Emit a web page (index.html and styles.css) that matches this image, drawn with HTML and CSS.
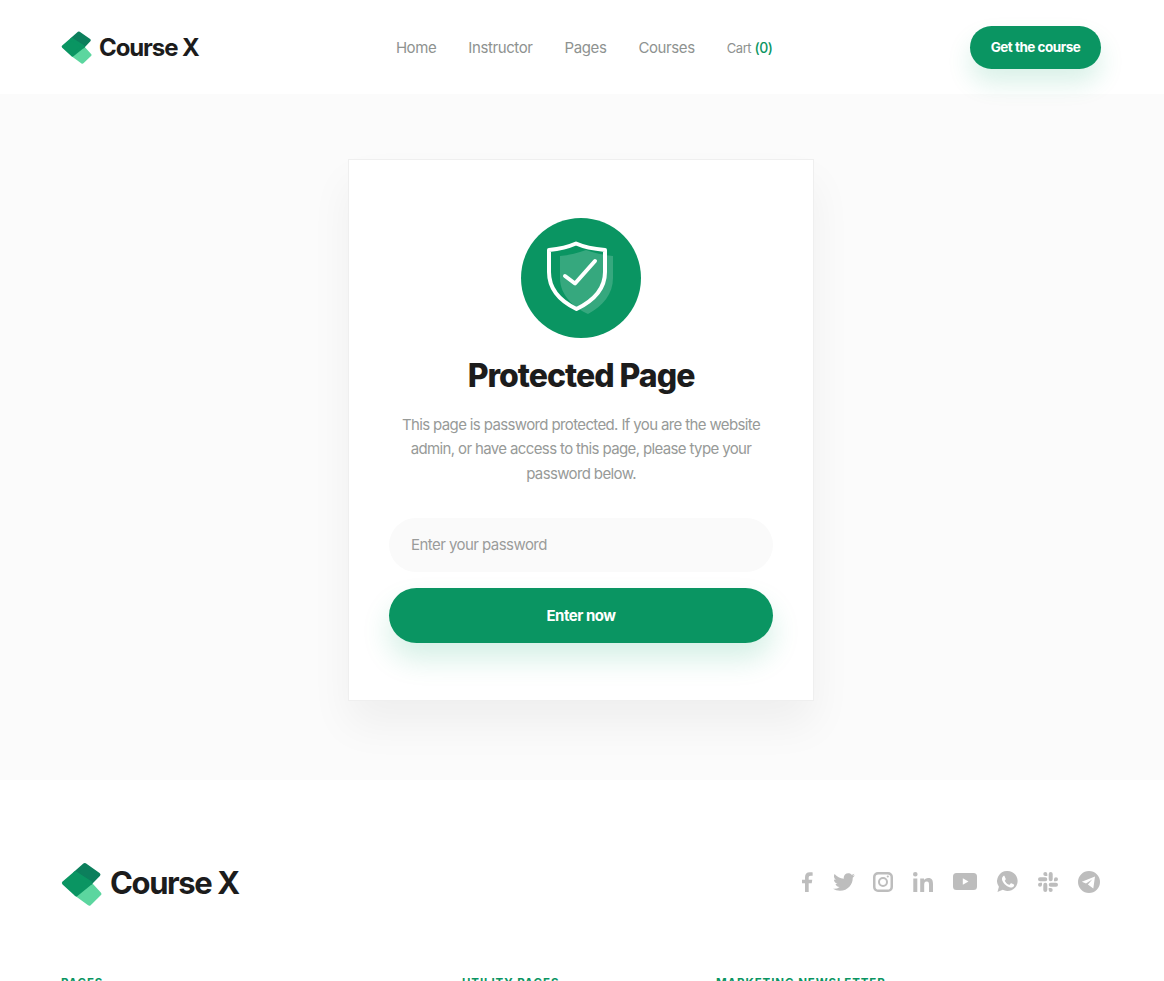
FILE: index.html
```html
<!DOCTYPE html>
<html lang="en">
<head>
  <meta charset="UTF-8">
  <title>Protected Page - Course X</title>
  <link rel="stylesheet" href="styles.css">
</head>
<body>

  <header class="header">
    <a class="logo" href="#">
      <svg class="logo-mark" viewBox="0 0 31 34"><use href="#mark"/></svg>
      <span class="logo-text">Course X</span>
    </a>
    <nav class="nav">
      <a href="#">Home</a>
      <a href="#">Instructor</a>
      <a href="#">Pages</a>
      <a href="#">Courses</a>
      <a class="cart" href="#">Cart <b>(0)</b></a>
    </nav>
    <a class="btn btn-small" href="#">Get the course</a>
  </header>

  <main class="main">
    <div class="card">
      <div class="shield">
        <svg viewBox="0 0 72 80" width="72" height="80">
          <path class="shield-back" d="M17 16 C27 15 35 13 43 10 C51 13 60 15 70 16 V38 C70 54 60 66 45 74 C32 68 17 56 17 38 Z"/>
          <path class="shield-line" d="M33 3.500 C42 7.500 51 9 62 10 V32 C62 49 50 61 33.500 69 C17 61 6 49 6 32 V10 C16 9 24 7.500 33 3.500 Z"/>
          <path class="shield-line" d="M22 36 L32 43.500 L52 21"/>
        </svg>
      </div>
      <h1>Protected Page</h1>
      <p>This page is password protected. If you are the website admin, or have access to this page, please type your password below.</p>
      <input type="password" placeholder="Enter your password">
      <button class="btn btn-big">Enter now</button>
    </div>
  </main>

  <footer class="footer">
    <div class="footer-top">
      <a class="logo logo-big" href="#">
        <svg class="logo-mark" viewBox="0 0 31 34"><use href="#mark"/></svg>
        <span class="logo-text">Course X</span>
      </a>
      <div class="social">
        <svg width="11" height="22" viewBox="0 0 12 22"><path d="M3.300 22V12.400H0V8.600h3.300V5.800C3.300 2.300 5.300 .4 8.300 .4c1.400 0 2.700 .1 3.300 .2v3.500H9.500c-1.700 0-2.200 1-2.200 2.100v2.400h3.900l-.6 3.800H7.300V22z"/></svg>
        <svg class="tw" width="22" height="18" viewBox="1.500 3.700 21 17.500" preserveAspectRatio="none"><path d="M22.460 6c-.77.350-1.600.580-2.460.690.880-.530 1.560-1.370 1.880-2.380-.830.500-1.750.850-2.720 1.050C18.370 4.500 17.260 4 16 4c-2.350 0-4.270 1.920-4.270 4.290 0 .340.040.670.110.980C8.280 9.090 5.110 7.380 3 4.790c-.370.630-.580 1.370-.580 2.150 0 1.490.750 2.810 1.910 3.560-.710 0-1.370-.200-1.950-.500v.030c0 2.080 1.480 3.820 3.440 4.210a4.220 4.220 0 0 1-1.930.070 4.280 4.280 0 0 0 4 2.980 8.521 8.521 0 0 1-5.330 1.840c-.340 0-.680-.020-1.020-.060C3.440 20.290 5.700 21 8.120 21 16 21 20.330 14.460 20.330 8.790c0-.190 0-.370-.010-.560.840-.600 1.560-1.360 2.140-2.230z"/></svg>
        <svg width="20" height="20" viewBox="0 0 20 20"><path fill-rule="evenodd" d="M5 0h10a5 5 0 0 1 5 5v10a5 5 0 0 1-5 5H5a5 5 0 0 1-5-5V5a5 5 0 0 1 5-5zm.3 2.500A2.800 2.800 0 0 0 2.500 5.300v9.400a2.800 2.800 0 0 0 2.800 2.800h9.400a2.800 2.800 0 0 0 2.800-2.800V5.300a2.800 2.800 0 0 0-2.800-2.800zM10 5a5 5 0 1 1 0 10 5 5 0 0 1 0-10zm0 2a3 3 0 1 0 0 6 3 3 0 0 0 0-6zm4.800-3.600a1.100 1.100 0 1 1 0 2.200 1.100 1.100 0 0 1 0-2.200z"/></svg>
        <svg width="20" height="20" viewBox="0 0 20 20"><path d="M2.300 0a2.300 2.300 0 1 1 0 4.600 2.300 2.300 0 0 1 0-4.600zM.3 6.400h4V20h-4zM7.200 6.400H11v1.900c.7-1.200 2.200-2.200 4.200-2.200 4 0 4.800 2.600 4.800 6V20h-4v-7c0-1.700-.1-3.500-2.300-3.500s-2.500 1.700-2.500 3.400V20h-4z"/></svg>
        <svg width="24" height="17" viewBox="0 0 24 17"><path fill-rule="evenodd" d="M3.500 0h17A3.500 3.500 0 0 1 24 3.500v10a3.500 3.500 0 0 1-3.500 3.500h-17A3.500 3.500 0 0 1 0 13.500v-10A3.500 3.500 0 0 1 3.500 0zm6.300 5.200v6.600l5.700-3.300z"/></svg>
        <svg width="21" height="23" viewBox="0 0 22 23"><path fill-rule="evenodd" d="M11 .5a10.500 10.500 0 1 1-5 19.700L.5 22.500 2 17A10.500 10.500 0 0 1 11 .5zM7.600 5.600c-.4 0-1 .1-1.400.7-.5.600-1 1.400-1 2.700 0 1.600 1.100 3.100 1.300 3.300.2.300 2.200 3.400 5.400 4.700 2.600 1 3.100.8 3.700.8.600-.1 1.900-.8 2.100-1.500.3-.7.3-1.400.2-1.500-.1-.2-.3-.2-.7-.4l-2.100-1c-.3-.1-.6-.2-.8.200-.2.300-.8 1-1 1.200-.2.200-.4.200-.7.100-.9-.4-1.800-.8-2.900-1.900-.8-.8-1.300-1.600-1.500-1.900-.2-.3 0-.5.100-.7l.5-.6c.2-.2.200-.4.300-.6.100-.2.100-.4 0-.6l-1-2.200c-.2-.8-.6-.8-1-.8z"/></svg>
        <svg width="20" height="20" viewBox="0 0 20 20"><path d="M7.300 0a2 2 0 0 1 2 2v2h-2a2 2 0 0 1 0-4zM0 7.300a2 2 0 0 1 2-2h5.300a2 2 0 0 1 0 4H2a2 2 0 0 1-2-2zM20 7.300a2 2 0 0 1-2 2h-2v-2a2 2 0 0 1 4 0zM14.700 7.300a2 2 0 0 1-4 0V2a2 2 0 0 1 4 0zM12.700 20a2 2 0 0 1-2-2v-2h2a2 2 0 0 1 0 4zM20 12.700a2 2 0 0 1-2 2h-5.300a2 2 0 0 1 0-4H18a2 2 0 0 1 2 2zM0 12.700a2 2 0 0 1 2-2h2v2a2 2 0 0 1-4 0zM5.300 12.700a2 2 0 0 1 4 0V18a2 2 0 0 1-4 0z"/></svg>
        <svg width="22" height="22" viewBox="0 0 22 22"><path fill-rule="evenodd" d="M11 0a11 11 0 1 1 0 22 11 11 0 0 1 0-22zm6 5.600L3.800 10.800l4.200 1.700 6.500-4.200-4.600 5.300 5.400 4z"/></svg>
      </div>
    </div>
    <div class="footer-cols">
      <h4>Pages</h4>
      <h4>Utility pages</h4>
      <h4>Marketing newsletter</h4>
    </div>
  </footer>

  <svg class="defs" width="0" height="0">
    <symbol id="mark" viewBox="0 0 31 34">
      <path class="m-light" d="M22.200 17.500 L29 24.900 L21.400 32.300 L11.500 25 Z"/>
      <path class="m-dark" d="M10.800 9.200 L17.900 3 L28.300 10.200 L22.200 16.600 Z"/>
      <path class="m-mid" d="M2.200 16.600 L10.800 9.200 L22.200 16.600 L11.500 25.200 Z"/>
    </symbol>
  </svg>

</body>
</html>
```

FILE: styles.css
```css
* {
  box-sizing: border-box;
}

html, body {
  height: 981px;
  overflow: hidden;
}

body {
  margin: 0;
  background: #fff;
  font-family: Inter, "Liberation Sans", sans-serif;
  color: #1c1c1c;
}

a {
  text-decoration: none;
  color: inherit;
}

.defs {
  position: absolute;
}

.header {
  height: 94px;
  padding: 0 63px 0 61px;
  display: flex;
  justify-content: space-between;
  align-items: center;
  background: #fff;
}

.logo {
  display: flex;
  align-items: center;
  gap: 7px;
}

.logo-mark {
  width: 31px;
  height: 34px;
}

.logo-text {
  font-size: 24px;
  font-weight: 700;
  letter-spacing: -1.1px;
}

.logo-big {
  gap: 8px;
}

.logo-big .logo-mark {
  width: 41px;
  height: 45px;
}

.logo-big .logo-text {
  margin-bottom: 3px;
  font-size: 31px;
  letter-spacing: -1.400px;
}

.m-dark, .m-mid, .m-light {
  stroke-width: 3px;
  stroke-linejoin: round;
}

.m-dark {
  fill: #0c7f5c;
  stroke: #0c7f5c;
}

.m-mid {
  fill: #0a9562;
  stroke: #0a9562;
}

.m-light {
  fill: #5cd69f;
  stroke: #5cd69f;
}

.nav {
  display: flex;
  align-items: center;
  gap: 32px;
  font-size: 15px;
  letter-spacing: -0.4px;
  color: #8e9290;
}

.cart {
  font-size: 13px;
}

.cart b {
  font-size: 14px;
  font-weight: 500;
  color: #0a9562;
}

.btn {
  display: block;
  border: none;
  background: #0a9562;
  color: #fff;
  font-family: inherit;
  font-weight: 700;
  text-align: center;
  letter-spacing: -0.5px;
}

.btn-small {
  width: 131px;
  height: 43px;
  line-height: 43px;
  border-radius: 22px;
  font-size: 13.500px;
  box-shadow: 0 14px 24px rgba(20, 170, 115, 0.16);
}

.main {
  height: 686px;
  padding: 65px 63px 0 61px;
  background: #fbfbfb;
}

.card {
  width: 466px;
  height: 542px;
  margin: 0 auto;
  padding: 58px 40px 0;
  background: #fff;
  border: 1px solid #efefef;
  box-shadow: 0 24px 40px rgba(0, 0, 0, 0.05);
  text-align: center;
}

.shield {
  width: 120px;
  height: 120px;
  margin: 0 auto;
  padding-top: 22px;
  padding-left: 22px;
  border-radius: 50%;
  background: #0a9562;
  display: flex;
}

.shield-back {
  fill: #fff;
  opacity: 0.18;
}

.shield-line {
  fill: none;
  stroke: #fff;
  stroke-width: 4px;
  stroke-linejoin: round;
  stroke-linecap: round;
}

h1 {
  margin: 18px 0 0;
  font-size: 32px;
  line-height: 40px;
  font-weight: 800;
  letter-spacing: -1px;
}

.card p {
  margin: 17px 0 0;
  font-size: 15px;
  line-height: 24.300px;
  letter-spacing: -0.63px;
  color: #979a98;
}

input {
  display: block;
  width: 100%;
  height: 54px;
  margin-top: 32px;
  padding: 0 22px;
  border: none;
  border-radius: 27px;
  background: #fafafa;
  font-family: inherit;
  font-size: 15px;
  letter-spacing: -0.55px;
}

input::placeholder {
  color: #9a9c9b;
  opacity: 1;
}

.btn-big {
  width: 100%;
  height: 55px;
  margin-top: 16px;
  border-radius: 28px;
  font-size: 15px;
  box-shadow: 0 16px 28px rgba(20, 170, 115, 0.18);
}

.footer {
  padding: 81px 63px 0 61px;
}

.footer-top {
  display: flex;
  justify-content: space-between;
  align-items: center;
  height: 45px;
}

.social {
  display: flex;
  align-items: center;
  gap: 20px;
  margin: 0 1px 4px 0;
}

.social svg {
  fill: #bdbdbd;
}

.social .tw {
  margin-right: -2px;
}

.footer-cols {
  display: grid;
  grid-template-columns: 401px 254px 1fr;
  margin-top: 70px;
}

h4 {
  margin: 0;
  font-size: 11.500px;
  line-height: 14px;
  font-weight: 700;
  letter-spacing: 0.9px;
  text-transform: uppercase;
  color: #0a9562;
}
```
